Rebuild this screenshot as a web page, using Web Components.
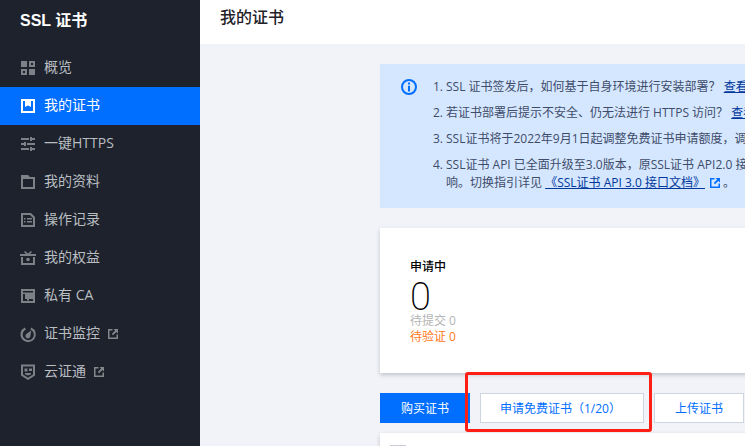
<!DOCTYPE html>
<html lang="zh">
<head>
<meta charset="utf-8">
<title>SSL 证书</title>
<style>
  html, body { margin: 0; height: 100%; overflow: hidden; }
  body {
    display: flex;
    font-family: "Open Sans", "Noto Sans CJK SC", sans-serif;
    font-size: 12px;
    background: #f2f3f8;
  }
</style>
</head>
<body>
<ssl-sidebar title-text="SSL 证书">
  <ssl-nav-item icon="overview">概览</ssl-nav-item>
  <ssl-nav-item icon="cert" active>我的证书</ssl-nav-item>
  <ssl-nav-item icon="sliders">一键HTTPS</ssl-nav-item>
  <ssl-nav-item icon="folder">我的资料</ssl-nav-item>
  <ssl-nav-item icon="record">操作记录</ssl-nav-item>
  <ssl-nav-item icon="gift">我的权益</ssl-nav-item>
  <ssl-nav-item icon="store">私有 CA</ssl-nav-item>
  <ssl-nav-item icon="monitor" external>证书监控</ssl-nav-item>
  <ssl-nav-item icon="shield" external>云证通</ssl-nav-item>
</ssl-sidebar>
<ssl-page heading="我的证书">
  <ssl-notice>
    <li>SSL 证书签发后，如何基于自身环境进行安装部署？ <a>查看证书安装指引</a></li>
    <li>若证书部署后提示不安全、仍无法进行 HTTPS 访问？ <a>查看排查指引</a></li>
    <li>SSL证书将于2022年9月1日起调整免费证书申请额度，调整详情请查看公告</li>
    <li>SSL证书 API 已全面升级至3.0版本，原SSL证书 API2.0 接口将下线，请及时切换以免造成影<br>响。切换指引详见 <a>《SSL证书 API 3.0 接口文档》</a><ssl-ext-icon style="color:#006eff;margin-left:5px"></ssl-ext-icon> 。</li>
  </ssl-notice>
  <ssl-stat-card label="申请中" value="0">
    <div style="color:#b5b5b5">待提交 0</div>
    <div style="color:#ff7a1a">待验证 0</div>
  </ssl-stat-card>
  <ssl-toolbar>
    <ssl-button primary>购买证书</ssl-button>
    <ssl-button wide>申请免费证书（1/20）</ssl-button>
    <ssl-button>上传证书</ssl-button>
  </ssl-toolbar>
  <ssl-table-card></ssl-table-card>
</ssl-page>

<script>
const ICONS = {
  overview: '<path d="M0 0h6v6H0zM8 8h6v6H8z"/><path fill-rule="evenodd" d="M8 0h6v6H8zM10 2v2h2V2zM0 8h6v6H0zM2 10v2h2v-2z"/>',
  cert: '<path fill-rule="evenodd" d="M0 0h14v14H0zM2 2v10h10V2h-2v6L7 6.500 4 8V2z"/>',
  sliders: '<path d="M0 1h8v2H0zM9 0h2v4H9zM11 1h3v2h-3zM0 6h3v2H0zM3 5h2v4H3zM6 6h8v2H6zM0 11h8v2H0zM9 10h2v4H9zM11 11h3v2h-3z"/>',
  folder: '<path fill-rule="evenodd" d="M0 0h7l2 2h5v12H0zM2 4v8h10V4z"/>',
  record: '<path fill-rule="evenodd" d="M0 0h10l4 4v10H0zM2 2v10h10V5L9 2zM3 5h1.500v1.500H3zM6 5h5v1.500H6zM3 8h1.500v1.500H3zM6 8h5v1.500H6z"/>',
  gift: '<path d="M4 0l3 2.500L10 0l1 1-2 2h6v2H-1V3h6L3 1z"/><path fill-rule="evenodd" d="M0 6h2v6h10V6h2v8H0z"/><circle cx="7" cy="8.500" r="1.800"/>',
  store: '<path fill-rule="evenodd" d="M0 0h14v14H0zM2 2v1.500h10V2zM2 5v7h10v-2H8v1.500H6V10H4V5z"/><path d="M4 5h7v3H4z"/>',
  monitor: '<path d="M3.900.5A7.700 7.700 0 1 0 10.300.5l-.9 1.900a5.600 5.600 0 1 1-4.500.1z"/><path d="M10.200 3.500L9.400 9a2.500 2.500 0 1 1-3.900-2.200z"/>',
  shield: '<path fill-rule="evenodd" d="M0-.5h14v11L7 15 0 10.500zM2 1.500v7.900l5 3.300 5-3.300V1.500z"/><path d="M3.500 3.500h3v3h-3zM8 3.500h3V6H8zM4 8h6v1.300L7 10.500 4 9.300z"/>'
};

class SslSidebar extends HTMLElement {
  constructor() {
    super();
    this.attachShadow({mode: 'open'}).innerHTML = `
      <style>
        :host { flex: 0 0 200px; height: 446px; background: #1e222d; display: block; }
        h1 { margin: 0; height: 49px; padding-left: 20px; font-family: "Liberation Sans", "Noto Sans CJK SC", sans-serif; font-size: 16px; line-height: 42px; color: #fff; font-weight: 700; }
      </style>
      <h1>${this.getAttribute('title-text')}</h1>
      <slot></slot>`;
  }
}

class SslNavItem extends HTMLElement {
  constructor() {
    super();
    const ext = this.hasAttribute('external') ? '<ssl-ext-icon></ssl-ext-icon>' : '';
    this.attachShadow({mode: 'open'}).innerHTML = `
      <style>
        :host { display: flex; align-items: center; height: 38px; padding-left: 21px; color: #b9bec1; font-size: 14px; }
        :host([active]) { background: #006eff; color: #fff; }
        svg { width: 14px; height: 14px; margin-right: 9px; fill: #7b8186; overflow: visible; flex: none; }
        :host([active]) svg { fill: #fff; }
        .label { padding-bottom: 5px; }
        ssl-ext-icon { margin-left: 8px; color: #83878b; }
      </style>
      <svg viewBox="0 0 14 14">${ICONS[this.getAttribute('icon')]}</svg>
      <span class="label"><slot></slot></span>${ext}`;
  }
}

class SslExtIcon extends HTMLElement {
  constructor() {
    super();
    this.attachShadow({mode: 'open'}).innerHTML = `
      <style>
        :host { display: inline-flex; vertical-align: -1px; }
        svg { width: 10px; height: 10px; fill: currentColor; }
      </style>
      <svg viewBox="0 0 10 10"><path fill-rule="evenodd" d="M0 0h4.500v1.500H1.500v7h7v-3H10V10H0zM5.500 0H10v4.500L8.400 2.900 5 6.200 3.800 5 7.100 1.600z"/></svg>`;
  }
}

class SslPage extends HTMLElement {
  constructor() {
    super();
    this.attachShadow({mode: 'open'}).innerHTML = `
      <style>
        :host { flex: 1; min-width: 0; display: block; overflow: hidden; height: 446px; }
        header { height: 44px; background: #fff; padding-left: 20px; font-size: 16px; line-height: 35px; color: #1f2228; font-weight: 500; box-sizing: border-box; }
        main { width: 1000px; padding: 20px 0 0 180px; display: flex; flex-direction: column; }
      </style>
      <header>${this.getAttribute('heading')}</header>
      <main><slot></slot></main>`;
  }
}

class SslNotice extends HTMLElement {
  constructor() {
    super();
    this.attachShadow({mode: 'open'}).innerHTML = `
      <style>
        :host { display: flex; height: 144px; box-sizing: border-box; padding: 14px 0 0 21px; background: #d5e7ff; color: #3e4c6a; line-height: 18px; white-space: nowrap; }
        svg { width: 16px; height: 16px; margin: 1px 16px 0 0; flex: none; }
        .list { display: flex; flex-direction: column; gap: 8px; }
        ::slotted(li) { display: block; }
      </style>
      <svg viewBox="0 0 16 16"><circle cx="8" cy="8" r="7" fill="none" stroke="#006eff" stroke-width="2"/><path fill="#006eff" d="M7 3.500h2v2H7zM7 6.800h2v5.700H7z"/></svg>
      <div class="list"><slot></slot></div>`;
  }
  connectedCallback() {
    [...this.querySelectorAll('li')].forEach((li, i) => {
      if (li.querySelector('.n')) return;
      const n = document.createElement('span');
      n.className = 'n';
      n.textContent = (i + 1) + '. ';
      n.style.cssText = 'display:inline-block;width:13px;margin-left:-13px';
      li.style.marginLeft = '13px';
      li.prepend(n);
    });
    this.querySelectorAll('a').forEach(a => {
      a.style.cssText = 'color:#00379c;text-decoration:underline';
    });
  }
}

class SslStatCard extends HTMLElement {
  constructor() {
    super();
    this.attachShadow({mode: 'open'}).innerHTML = `
      <style>
        :host { display: block; height: 145px; margin-top: 20px; box-sizing: border-box; padding: 30px 30px 0; background: #fff; box-shadow: 0 2px 4px rgba(54, 58, 80, .25); }
        .label { font-weight: 500; color: #000; line-height: 18px; }
        .value { font-family: Roboto, sans-serif; font-weight: 200; font-size: 38px; line-height: 31px; padding-top: 6px; color: #000; }
        .sub { line-height: 16px; }
      </style>
      <div class="label">${this.getAttribute('label')}</div>
      <div class="value">${this.getAttribute('value')}</div>
      <div class="sub"><slot></slot></div>`;
  }
}

class SslToolbar extends HTMLElement {
  constructor() {
    super();
    this.attachShadow({mode: 'open'}).innerHTML = `
      <style>
        :host { display: flex; gap: 10px; margin-top: 20px; position: relative; }
        /* the red mark lies over the buttons, it is an annotation on the screenshot */
        .mark { position: absolute; left: 85px; top: -21px; width: 181px; height: 54px; border: 3px solid #ff1f14; border-radius: 3px; pointer-events: none; }
      </style>
      <slot></slot>
      <div class="mark"></div>`;
  }
}

class SslButton extends HTMLElement {
  constructor() {
    super();
    this.attachShadow({mode: 'open'}).innerHTML = `
      <style>
        :host { display: flex; align-items: center; justify-content: center; box-sizing: border-box; width: 90px; height: 30px; background: #fff; border: 1px solid #cfd5de; color: #006eff; font-size: 12px; white-space: nowrap; }
        :host([wide]) { width: 164px; padding-right: 3px; }
        :host([primary]) { background: #006eff; border-color: #006eff; color: #fff; }
      </style>
      <slot></slot>`;
  }
}

class SslTableCard extends HTMLElement {
  constructor() {
    super();
    this.attachShadow({mode: 'open'}).innerHTML = `
      <style>
        :host { display: block; height: 60px; margin-top: 10px; background: #fff; box-shadow: 0 2px 4px rgba(54, 58, 80, .25); padding: 12px 0 0 10px; box-sizing: border-box; }
        .check { width: 16px; height: 16px; box-sizing: border-box; border: 1px solid #c8ccd6; background: #fff; }
      </style>
      <div class="check"></div>`;
  }
}

customElements.define('ssl-ext-icon', SslExtIcon);
customElements.define('ssl-sidebar', SslSidebar);
customElements.define('ssl-nav-item', SslNavItem);
customElements.define('ssl-page', SslPage);
customElements.define('ssl-notice', SslNotice);
customElements.define('ssl-stat-card', SslStatCard);
customElements.define('ssl-toolbar', SslToolbar);
customElements.define('ssl-button', SslButton);
customElements.define('ssl-table-card', SslTableCard);
</script>
</body>
</html>
